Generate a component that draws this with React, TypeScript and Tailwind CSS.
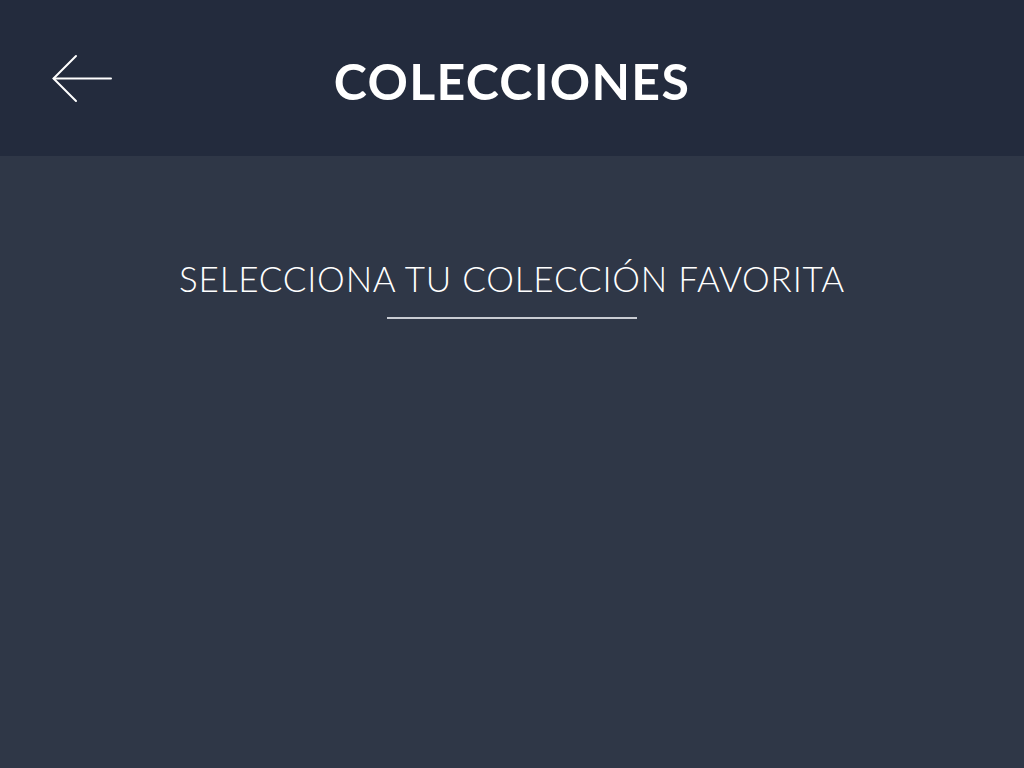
export default function App() {
  return (
    <div className="min-h-screen w-full bg-[#2f3747] flex flex-col" style={{ fontFamily: 'Lato, "Open Sans", sans-serif' }}>
      <header className="h-[156px] bg-[#232b3d] flex items-center relative">
        <button className="absolute left-[52px] top-[54px] w-[60px] h-[50px]">
          <svg width="60" height="50" viewBox="0 0 60 50" fill="none" stroke="white" strokeWidth="2" strokeLinecap="round">
            <path d="M59 24.5H2" />
            <path d="M24 2L1.5 24.5L24 47" />
          </svg>
        </button>
        <h1 className="w-full text-center text-white font-bold text-[50px] tracking-[1.3px] mt-[6px]" style={{ fontFamily: 'Lato, sans-serif' }}>
          COLECCIONES
        </h1>
      </header>
      <main className="flex flex-col items-center pt-[98px]">
        <h2 className="text-white font-light text-[35px] tracking-[0.8px] leading-[48px]">
          SELECCIONA TU COLECCIÓN FAVORITA
        </h2>
        <div className="w-[250px] h-[2px] bg-[#c9ccd3] mt-[15px]" />
      </main>
    </div>
  );
}
